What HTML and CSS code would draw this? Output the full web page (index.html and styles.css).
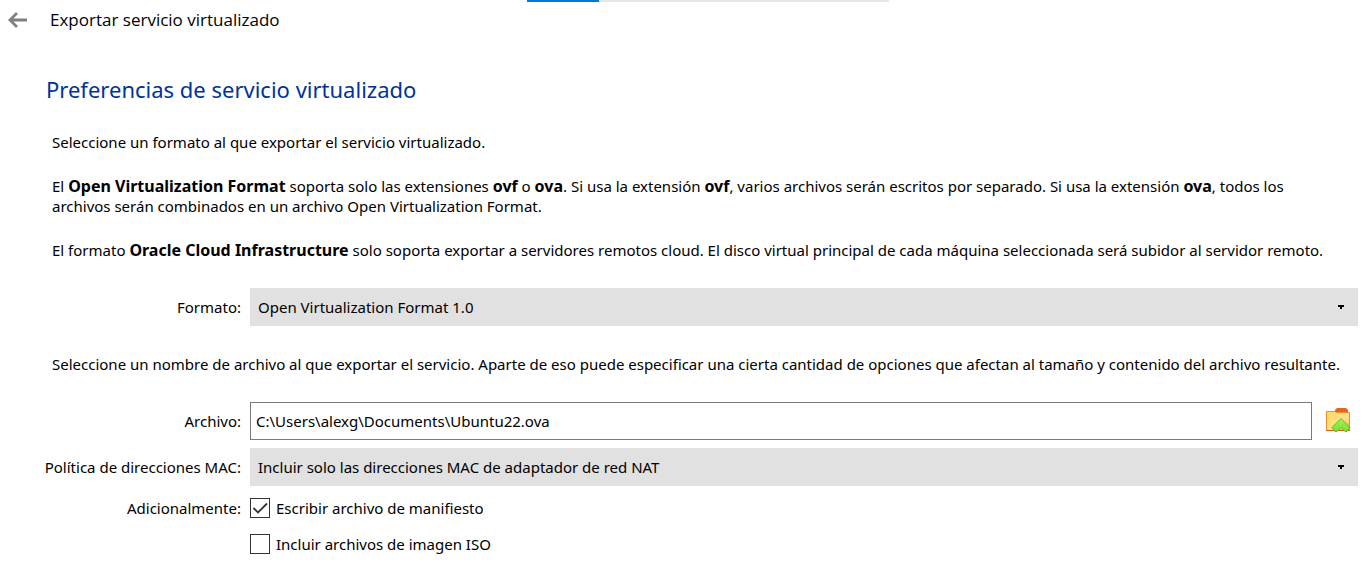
FILE: index.html
```
<!DOCTYPE html>
<html lang="es">
<head>
<meta charset="utf-8">
<title>Exportar servicio virtualizado</title>
<link rel="stylesheet" href="styles.css">
</head>
<body>
<div class="progress-track"><div class="progress"><div class="progress-bar"></div></div></div>
<header class="titlebar">
  <button class="back" type="button" aria-label="Atrás">
    <svg width="20" height="18" viewBox="0 0 20 18" fill="none" stroke="#808080" stroke-width="2.8"><path d="M20 9H3M10 2L3 9l7 7"/></svg>
  </button>
  <span class="window-title">Exportar servicio virtualizado</span>
</header>
<main class="page">
  <h1 class="heading">Preferencias de servicio virtualizado</h1>
  <div class="intro">
    <p>Seleccione un formato al que exportar el servicio virtualizado.</p>
    <p>El <b>Open Virtualization Format</b> soporta solo las extensiones <b>ovf</b> o <b>ova</b>. Si usa la extensión <b>ovf</b>, varios archivos serán escritos por separado. Si usa la extensión <b>ova</b>, todos los archivos serán combinados en un archivo Open Virtualization Format.</p>
    <p>El formato <b>Oracle Cloud Infrastructure</b> solo soporta exportar a servidores remotos cloud. El disco virtual principal de cada máquina seleccionada será subidor al servidor remoto.</p>
  </div>
  <form class="form">
    <div class="row">
      <label class="label" for="format">Formato:</label>
      <div class="combo">
        <select id="format"><option>Open Virtualization Format 1.0</option></select>
        <svg class="caret" width="6" height="4" viewBox="0 0 6 4" shape-rendering="crispEdges"><path d="M0 0h6v2H4v2H2V2H0z"/></svg>
      </div>
    </div>
    <p class="note">Seleccione un nombre de archivo al que exportar el servicio. Aparte de eso puede especificar una cierta cantidad de opciones que afectan al tamaño y contenido del archivo resultante.</p>
    <div class="row">
      <label class="label" for="file">Archivo:</label>
      <div class="file">
        <input class="path" id="file" type="text" value="C:\Users\alexg\Documents\Ubuntu22.ova">
        <button class="browse" type="button" aria-label="Examinar">
          <svg width="26" height="26" viewBox="0 0 26 26">
            <defs>
              <linearGradient id="folder" x1="0" y1="0" x2="1" y2="1"><stop offset="0" stop-color="#ffd95c"/><stop offset="0.6" stop-color="#ffe08a"/><stop offset="1" stop-color="#ffb02e"/></linearGradient>
              <linearGradient id="arrow" x1="0" y1="0" x2="0" y2="1"><stop offset="0" stop-color="#a8f05a"/><stop offset="1" stop-color="#78e028"/></linearGradient>
            </defs>
            <path d="M10 5V2l2-2h9l2 2v2l2 1v3H10z" fill="#e8641b"/>
            <path d="M1.500 3.500h8l2 1h13v18h-23z" fill="url(#folder)" stroke="#ee8d2c"/>
            <path d="M1 22.500h24" stroke="#dd5a1c"/>
            <path d="M16 10.500l9 9-3 4h-2l-4-4-4 4h-2l-3-4z" fill="url(#arrow)" stroke="#5cb82c" stroke-linejoin="round"/>
          </svg>
        </button>
      </div>
    </div>
    <div class="row mac">
      <label class="label" for="mac">Política de direcciones MAC:</label>
      <div class="combo">
        <select id="mac"><option>Incluir solo las direcciones MAC de adaptador de red NAT</option></select>
        <svg class="caret" width="6" height="4" viewBox="0 0 6 4" shape-rendering="crispEdges"><path d="M0 0h6v2H4v2H2V2H0z"/></svg>
      </div>
    </div>
    <div class="row extras" role="group" aria-labelledby="extras">
      <span class="label" id="extras">Adicionalmente:</span>
      <div class="checks">
        <label class="check"><span class="box"><input type="checkbox" checked><svg class="tick" width="20" height="20" viewBox="0 0 20 20" fill="none" stroke="#333" stroke-width="1.800"><path d="M3.500 10l4.500 4.500L17 5.500"/></svg></span>Escribir archivo de manifiesto</label>
        <label class="check"><span class="box"><input type="checkbox"><svg class="tick" width="20" height="20" viewBox="0 0 20 20" fill="none" stroke="#333" stroke-width="1.800"><path d="M3.500 10l4.500 4.500L17 5.500"/></svg></span>Incluir archivos de imagen ISO</label>
      </div>
    </div>
  </form>
</main>
</body>
</html>
```
FILE: styles.css
```
* { box-sizing: border-box; }
body { margin: 0; background: #fff; color: #000; font: 15px/20px "Noto Sans", "Open Sans", sans-serif; }
p { margin: 0; }
b { font-size: 16px; line-height: 16px; }
button { padding: 0; border: 0; background: none; display: flex; }
select, input { font: inherit; color: inherit; }
.progress-track { padding-left: 50px; }
.progress { height: 2px; width: 362px; margin: 0 auto; background: #e6e6e6; }
.progress-bar { width: 20%; height: 100%; background: #0078d7; }
.titlebar { display: flex; align-items: center; gap: 23px; height: 36px; padding-left: 7px; }
.window-title { font: 17px/24px "Open Sans", sans-serif; }
.page { padding: 35px 8px 16px 44px; }
.heading { margin: 0; padding-left: 2px; font-size: 22px; line-height: 32px; font-weight: 400; color: #003399; }
.intro { display: flex; flex-direction: column; gap: 24px; padding: 27px 24px 28px 8px; }
.row { display: grid; grid-template-columns: 197px 1fr; column-gap: 9px; align-items: center; }
.label { text-align: right; white-space: nowrap; }
.combo { display: grid; align-items: center; }
.combo select { grid-area: 1 / 1; width: 100%; height: 38px; padding: 0 32px 0 8px; border: 0; border-radius: 0; background: #e1e1e1; appearance: none; }
.caret { grid-area: 1 / 1; justify-self: end; margin-right: 14px; pointer-events: none; }
.note { padding: 28px 0 28px 8px; }
.file { display: flex; align-items: center; gap: 13px; }
.path { flex: 1; min-width: 0; height: 38px; padding: 0 5px; border: 1px solid #7a7a7a; }
.browse { margin-right: 7px; }
.mac { margin-top: 8px; }
.extras { margin-top: 12px; align-items: start; }
.checks { display: flex; flex-direction: column; align-items: flex-start; gap: 16px; }
.check { display: flex; align-items: center; gap: 6px; }
.box { display: grid; }
.box input { grid-area: 1 / 1; width: 20px; height: 20px; margin: 0; border: 1px solid #333; background: #fff; appearance: none; }
.tick { grid-area: 1 / 1; visibility: hidden; pointer-events: none; }
.box input:checked + .tick { visibility: visible; }
```
